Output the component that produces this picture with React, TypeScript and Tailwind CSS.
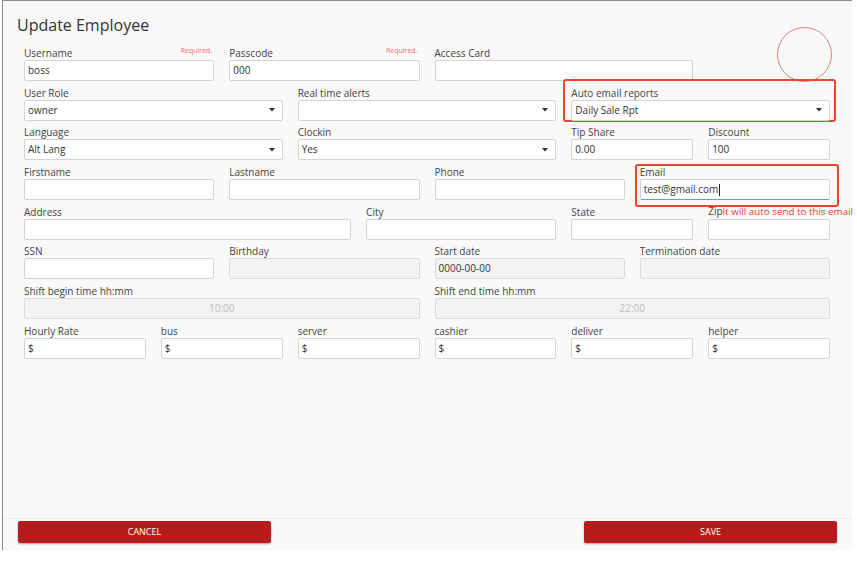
import React from 'react'

type Kind = 'text' | 'select' | 'disabled'

interface FieldProps {
  label: React.ReactNode
  span: string
  value?: string
  kind?: Kind
  required?: boolean
  center?: boolean
  focused?: boolean
  annotate?: string
}

const Caret = () => (
  <svg width="6" height="4" viewBox="0 0 6 4" className="absolute right-[7px] top-1/2 -translate-y-1/2">
    <path d="M0 0h6L3 3.5z" fill="#333" />
  </svg>
)

const Field: React.FC<FieldProps> = ({ label, span, value = '', kind = 'text', required, center, focused, annotate }) => {
  const box =
    kind === 'disabled'
      ? 'bg-[#f3f3f3] border-[#d9d9d9]'
      : 'bg-white border-[#d4d4d4]'
  return (
    <div className={`relative ${span}`}>
      {annotate && <div className={`absolute rounded-[3px] border-2 border-[#e8452f] ${annotate}`} />}
      <div className="relative flex h-[14px] items-center justify-between text-[10px] leading-[14px] text-[#444]">
        <span className="whitespace-nowrap">{label}</span>
        {required && <span className="-mt-[4px] pr-[2px] text-[7px] text-[#f26b6b]">Required.</span>}
      </div>
      <div
        className={`relative flex h-[21px] items-center rounded-[2px] border px-[3px] text-[10px] ${box} ${
          center ? 'justify-center text-[#bdbdbd]' : 'text-[#333]'
        } ${focused ? 'border-b-[#4db6ac]' : ''}`}
      >
        <span>{value}</span>
        {focused && <span className="ml-[1px] h-[12px] w-px bg-[#222]" />}
        {kind === 'select' && <Caret />}
      </div>
    </div>
  )
}

export default function App() {
  return (
    <div className="h-[562px] w-[857px] bg-white" style={{ fontFamily: '"Open Sans", "Noto Sans", Arial, sans-serif' }}>
      <div className="relative ml-[2px] flex h-[550px] w-[850px] flex-col border-l border-t border-[#8c8c8c] bg-[#f9f9f9]">
        {/* marker circle */}
        <div className="absolute left-[774px] top-[26px] h-[55px] w-[55px] rounded-full border border-[#e27d7d]" />

        <div className="flex-1">
          <h1 className="mt-[12px] pl-[14px] text-[16px] leading-[24px] text-[#333]">Update Employee</h1>

          <div className="mt-[9px] grid w-[827px] grid-cols-12 gap-x-[15px] gap-y-[4.7px] pl-[21px]">
            <Field span="col-span-3" label="Username" value="boss" required />
            <Field span="col-span-3" label="Passcode" value="000" required />
            <Field span="col-span-4" label="Access Card" />
            <div className="col-span-2" />

            <Field span="col-span-4" label="User Role" value="owner" kind="select" />
            <Field span="col-span-4" label="Real time alerts" kind="select" />
            <Field
              span="col-span-4"
              label="Auto email reports"
              value="Daily Sale Rpt"
              kind="select"
              annotate="-left-[8px] -right-[6px] -top-[7px] -bottom-[1px]"
            />

            <Field span="col-span-4" label="Language" value="Alt Lang" kind="select" />
            <Field span="col-span-4" label="Clockin" value="Yes" kind="select" />
            <Field span="col-span-2" label="Tip Share" value="0.00" />
            <Field span="col-span-2" label="Discount" value="100" />

            <Field span="col-span-3" label="Firstname" />
            <Field span="col-span-3" label="Lastname" />
            <Field span="col-span-3" label="Phone" />
            <Field
              span="col-span-3"
              label="Email"
              value="test@gmail.com"
              focused
              annotate="-left-[5px] -right-[9px] -top-[1px] -bottom-[7px]"
            />

            <Field span="col-span-5" label="Address" />
            <Field span="col-span-3" label="City" />
            <Field span="col-span-2" label="State" />
            <Field
              span="col-span-2"
              label={
                <>
                  Zip<span className="text-[9.8px] text-[#e8402c]">It will auto send to this email</span>
                </>
              }
            />

            <Field span="col-span-3" label="SSN" />
            <Field span="col-span-3" label="Birthday" kind="disabled" />
            <Field span="col-span-3" label="Start date" value="0000-00-00" kind="disabled" />
            <Field span="col-span-3" label="Termination date" kind="disabled" />

            <Field span="col-span-6" label="Shift begin time hh:mm" value="10:00" kind="disabled" center />
            <Field span="col-span-6" label="Shift end time hh:mm" value="22:00" kind="disabled" center />

            <Field span="col-span-2" label="Hourly Rate" value="$" />
            <Field span="col-span-2" label="bus" value="$" />
            <Field span="col-span-2" label="server" value="$" />
            <Field span="col-span-2" label="cashier" value="$" />
            <Field span="col-span-2" label="deliver" value="$" />
            <Field span="col-span-2" label="helper" value="$" />
          </div>
        </div>

        <div className="flex h-[32px] justify-between border-t border-[#ececec] pl-[15px] pr-[15px] pt-[2px]">
          <button className="h-[22px] w-[253px] rounded-[2px] bg-[#b71c1c] text-[9px] text-white shadow-[0_1px_2px_rgba(0,0,0,0.35)]">
            CANCEL
          </button>
          <button className="h-[22px] w-[253px] rounded-[2px] bg-[#b71c1c] text-[9px] text-white shadow-[0_1px_2px_rgba(0,0,0,0.35)]">
            SAVE
          </button>
        </div>
      </div>
    </div>
  )
}
